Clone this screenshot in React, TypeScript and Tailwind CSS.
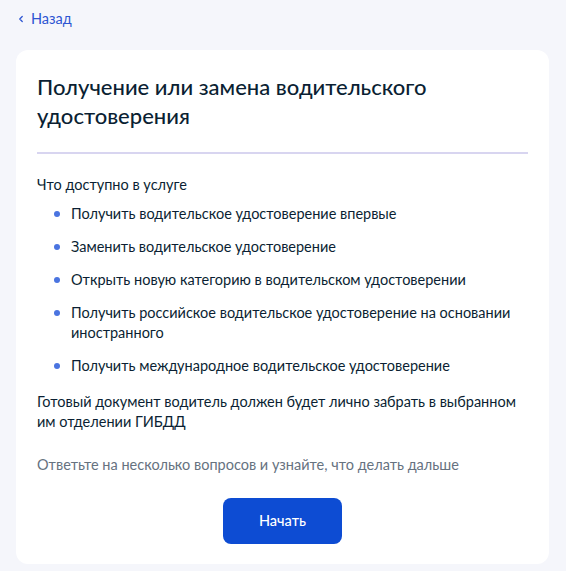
import { ChevronLeft } from "lucide-react"

const items = [
  "Получить водительское удостоверение впервые",
  "Заменить водительское удостоверение",
  "Открыть новую категорию в водительском удостоверении",
  "Получить российское водительское удостоверение на основании иностранного",
  "Получить международное водительское удостоверение",
]

export default function App() {
  return (
    <div className="min-h-[571px] bg-[#f5f6fb] px-4 pt-[9px] pb-[6px] font-['Lato','Noto_Sans',sans-serif] text-[#0b1f33]">
      {/* Back link */}
      <a href="#" className="flex items-center gap-[5px] text-[14.5px] leading-[20px] text-[#2d55d2] h-[20px]">
        <ChevronLeft className="h-[10px] w-[10px]" strokeWidth={3} />
        <span>Назад</span>
      </a>

      {/* Card */}
      <div className="mt-[21px] w-[533px] rounded-xl bg-white px-[21px] pt-[22px] pb-[20px]">
        <h1 className="text-[22px] leading-[29px] font-medium pr-8">
          Получение или замена водительского удостоверения
        </h1>
        <div className="mt-[22px] h-[2px] bg-[#d8d5f0]" />

        <p className="mt-[21px] text-[14.5px] leading-[20px]">Что доступно в услуге</p>
        <ul className="mt-[9px] flex flex-col gap-[13px] pl-[17px]">
          {items.map((item) => (
            <li key={item} className="flex gap-[11px] text-[14.5px] leading-[20px]">
              <span className="mt-[7px] h-[6px] w-[6px] shrink-0 rounded-full bg-[#4a74e0]" />
              <span>{item}</span>
            </li>
          ))}
        </ul>

        <p className="mt-[16px] text-[14.5px] leading-[20px] pr-2">
          Готовый документ водитель должен будет лично забрать в выбранном им отделении ГИБДД
        </p>
        <p className="mt-[23px] text-[14.5px] leading-[20px] text-[#66727f]">
          Ответьте на несколько вопросов и узнайте, что делать дальше
        </p>

        <div className="mt-[23px] flex justify-center">
          <button className="h-[46px] w-[119px] rounded-lg bg-[#0d4cd3] text-[14.5px] font-medium text-white">
            Начать
          </button>
        </div>
      </div>
    </div>
  )
}
